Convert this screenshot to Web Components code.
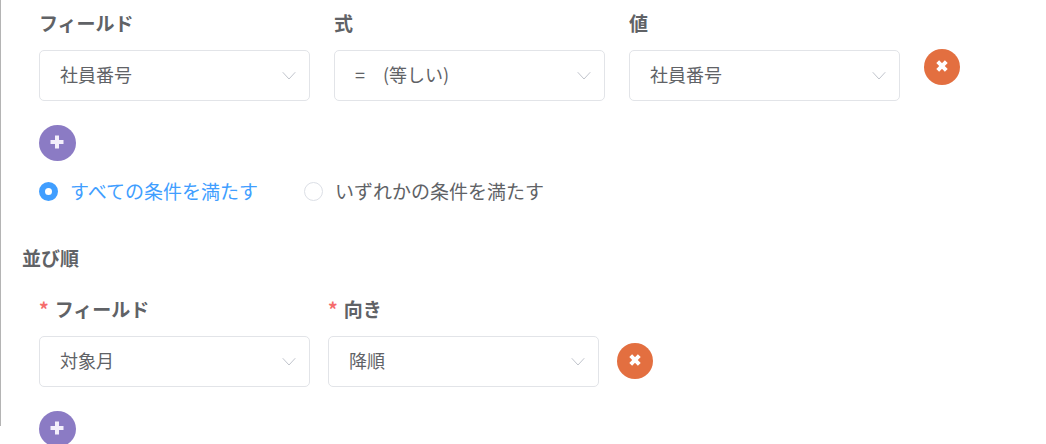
<!DOCTYPE html>
<html lang="ja">
<head>
<meta charset="utf-8">
<meta name="viewport" content="width=device-width, initial-scale=1">
<title>並び順</title>
<style>
  html {
    scrollbar-width: none;
  }

  body {
    margin: 0;
    background: #fff;
    color: #606266;
    font: 18px/26px "Noto Sans CJK JP", sans-serif;
  }
</style>
</head>
<body>
<query-panel>
  <condition-row>
    <select-field options="社員番号,社員名,対象月">フィールド</select-field>
    <select-field options="=　(等しい),≠　(等しくない)">式</select-field>
    <select-field options="社員番号,社員名,対象月">値</select-field>
    <round-button kind="remove" label="条件を削除" slot="action"></round-button>
  </condition-row>
  <round-button kind="add" label="条件を追加"></round-button>
  <match-mode></match-mode>
  <sort-section slot="sort">
    <span slot="title">並び順</span>
    <condition-row compact>
      <select-field required options="対象月,社員番号">フィールド</select-field>
      <select-field required options="降順,昇順">向き</select-field>
      <round-button kind="remove" label="並び順を削除" slot="action"></round-button>
    </condition-row>
    <round-button kind="add" label="並び順を追加"></round-button>
  </sort-section>
</query-panel>

<script>
/**
 * @function attach
 * @param {HTMLElement} host
 * @param {string} html
 * @returns {ShadowRoot}
 */
function attach (host, html) {
  const template = document.createElement('template');
  template.innerHTML = html;
  const root = host.attachShadow({mode: 'open'});
  root.appendChild(template.content.cloneNode(true));
  return root;
}

/**
 * @class QueryPanel
 */
class QueryPanel extends HTMLElement {
  constructor () {
    super();
    attach(this, `
      <style>
      :host {
        display: block;
        padding-top: 10px;
        background: linear-gradient(#b4b4b4, #b4b4b4) no-repeat 0 0 / 1px 426px;
      }

      .filters {
        display: flex;
        flex-direction: column;
        padding: 0 86px 0 39px;
      }
      </style>
      <div class="filters"><slot></slot></div>
      <slot name="sort"></slot>
    `);
  }
}

/**
 * @class SortSection
 */
class SortSection extends HTMLElement {
  constructor () {
    super();
    attach(this, `
      <style>
      :host {
        display: block;
        margin-top: 42px;
        padding: 0 86px 0 22px;
      }

      h2 {
        margin: 0 0 25px;
        font-size: 19px;
        line-height: 26px;
        font-weight: bold;
      }

      .body {
        padding-left: 17px;
      }
      </style>
      <h2><slot name="title"></slot></h2>
      <div class="body"><slot></slot></div>
    `);
  }
}

/**
 * @class ConditionRow
 */
class ConditionRow extends HTMLElement {
  constructor () {
    super();
    attach(this, `
      <style>
      :host {
        display: grid;
        grid-template-columns: repeat(3, minmax(0, 1fr)) 36px;
        gap: 24px;
        margin-bottom: 24px;
      }

      :host([compact]) {
        grid-template-columns: repeat(2, minmax(0, 271px)) 36px;
        gap: 18px;
      }

      /* keeps the button beside the box, below the label line */
      .action {
        display: flex;
        align-items: flex-start;
        padding-top: 39px;
      }

      :host([compact]) .action {
        align-items: center;
      }
      </style>
      <slot></slot>
      <div class="action"><slot name="action"></slot></div>
    `);
  }
}

/**
 * @class SelectField
 */
class SelectField extends HTMLElement {
  constructor () {
    super();
    const root = attach(this, `
      <style>
      :host {
        display: block;
      }

      label {
        display: flex;
        gap: 6px;
        margin-bottom: 14px;
        font-size: 19px;
        font-weight: bold;
        line-height: 26px;
      }

      .mark {
        display: none;
        color: #f56c6c;
      }

      :host([required]) .mark {
        display: inline;
      }

      .box {
        display: grid;
        align-items: center;
      }

      .box > * {
        grid-area: 1 / 1;
      }

      select {
        appearance: none;
        box-sizing: border-box;
        width: 100%;
        height: 51px;
        margin: 0;
        padding: 0 40px 4px 20px;
        border: 1px solid #e2e4e8;
        border-radius: 5px;
        background: #fff;
        color: inherit;
        font: inherit;
      }

      select:focus {
        border-color: #409eff;
        outline: none;
      }

      svg {
        justify-self: end;
        margin-right: 14px;
        pointer-events: none;
      }
      </style>
      <label for="control"><span class="mark">*</span><span><slot></slot></span></label>
      <div class="box">
        <select id="control"></select>
        <svg width="14" height="10" viewBox="0 0 14 10" fill="none" stroke="#c0c4cc" stroke-linecap="round" stroke-linejoin="round" aria-hidden="true">
          <path d="M1 1.5 7 8 13 1.5"/>
        </svg>
      </div>
    `);
    this.$select = root.querySelector('#control');
  }

  /**
   * @function connectedCallback
   * @returns {void}
   */
  connectedCallback () {
    this.$select.required = this.hasAttribute('required');
    this.$select.replaceChildren();
    this.getAttribute('options').split(',').forEach((text) => {
      this.$select.add(new Option(text));
    });
  }
}

/**
 * @class RoundButton
 */
class RoundButton extends HTMLElement {
  constructor () {
    super();
    const root = attach(this, `
      <style>
      :host {
        display: flex;
      }

      button {
        display: flex;
        align-items: center;
        justify-content: center;
        width: 36px;
        height: 36px;
        padding: 0 1px 2px 0;
        border: 0;
        border-radius: 50%;
        background: #e36f40;
        cursor: pointer;
      }

      :host([kind="add"]) button {
        width: 37px;
        background: #8b7bc4;
      }

      path {
        fill: none;
        stroke: #fff;
        stroke-width: 4;
      }

      .add {
        display: none;
        stroke: #f3effb;
        stroke-linejoin: round;
      }

      :host([kind="add"]) .add {
        display: inline;
      }

      :host([kind="add"]) .remove {
        display: none;
      }
      </style>
      <button type="button">
        <svg width="14" height="14" viewBox="0 0 14 14" aria-hidden="true">
          <path class="add" d="M7 .5v13M.5 7h13"/>
          <path class="remove" d="M2.7 2.7l8.6 8.6M11.3 2.7l-8.6 8.6"/>
        </svg>
      </button>
    `);
    this.$button = root.querySelector('button');
  }

  /**
   * @function connectedCallback
   * @returns {void}
   */
  connectedCallback () {
    this.$button.setAttribute('aria-label', this.getAttribute('label'));
  }
}

/**
 * @class MatchMode
 */
class MatchMode extends HTMLElement {
  constructor () {
    super();
    attach(this, `
      <style>
      :host {
        display: flex;
        flex-wrap: wrap;
        gap: 0 46px;
        margin-top: 18px;
        font-size: 19px;
        line-height: 24px;
      }

      label {
        display: flex;
        align-items: center;
        gap: 12px;
        cursor: pointer;
      }

      input {
        appearance: none;
        box-sizing: border-box;
        width: 19px;
        height: 19px;
        margin: 0;
        border: 1px solid #dcdfe6;
        border-radius: 50%;
        background: #fff;
      }

      input:checked {
        border: 6px solid #409eff;
      }

      input:checked + span {
        color: #409eff;
      }
      </style>
      <label for="all"><input type="radio" name="mode" id="all" checked><span>すべての条件を満たす</span></label>
      <label for="any"><input type="radio" name="mode" id="any"><span>いずれかの条件を満たす</span></label>
    `);
  }
}

// Register
customElements.define('query-panel', QueryPanel);
customElements.define('sort-section', SortSection);
customElements.define('condition-row', ConditionRow);
customElements.define('select-field', SelectField);
customElements.define('round-button', RoundButton);
customElements.define('match-mode', MatchMode);
</script>
</body>
</html>
